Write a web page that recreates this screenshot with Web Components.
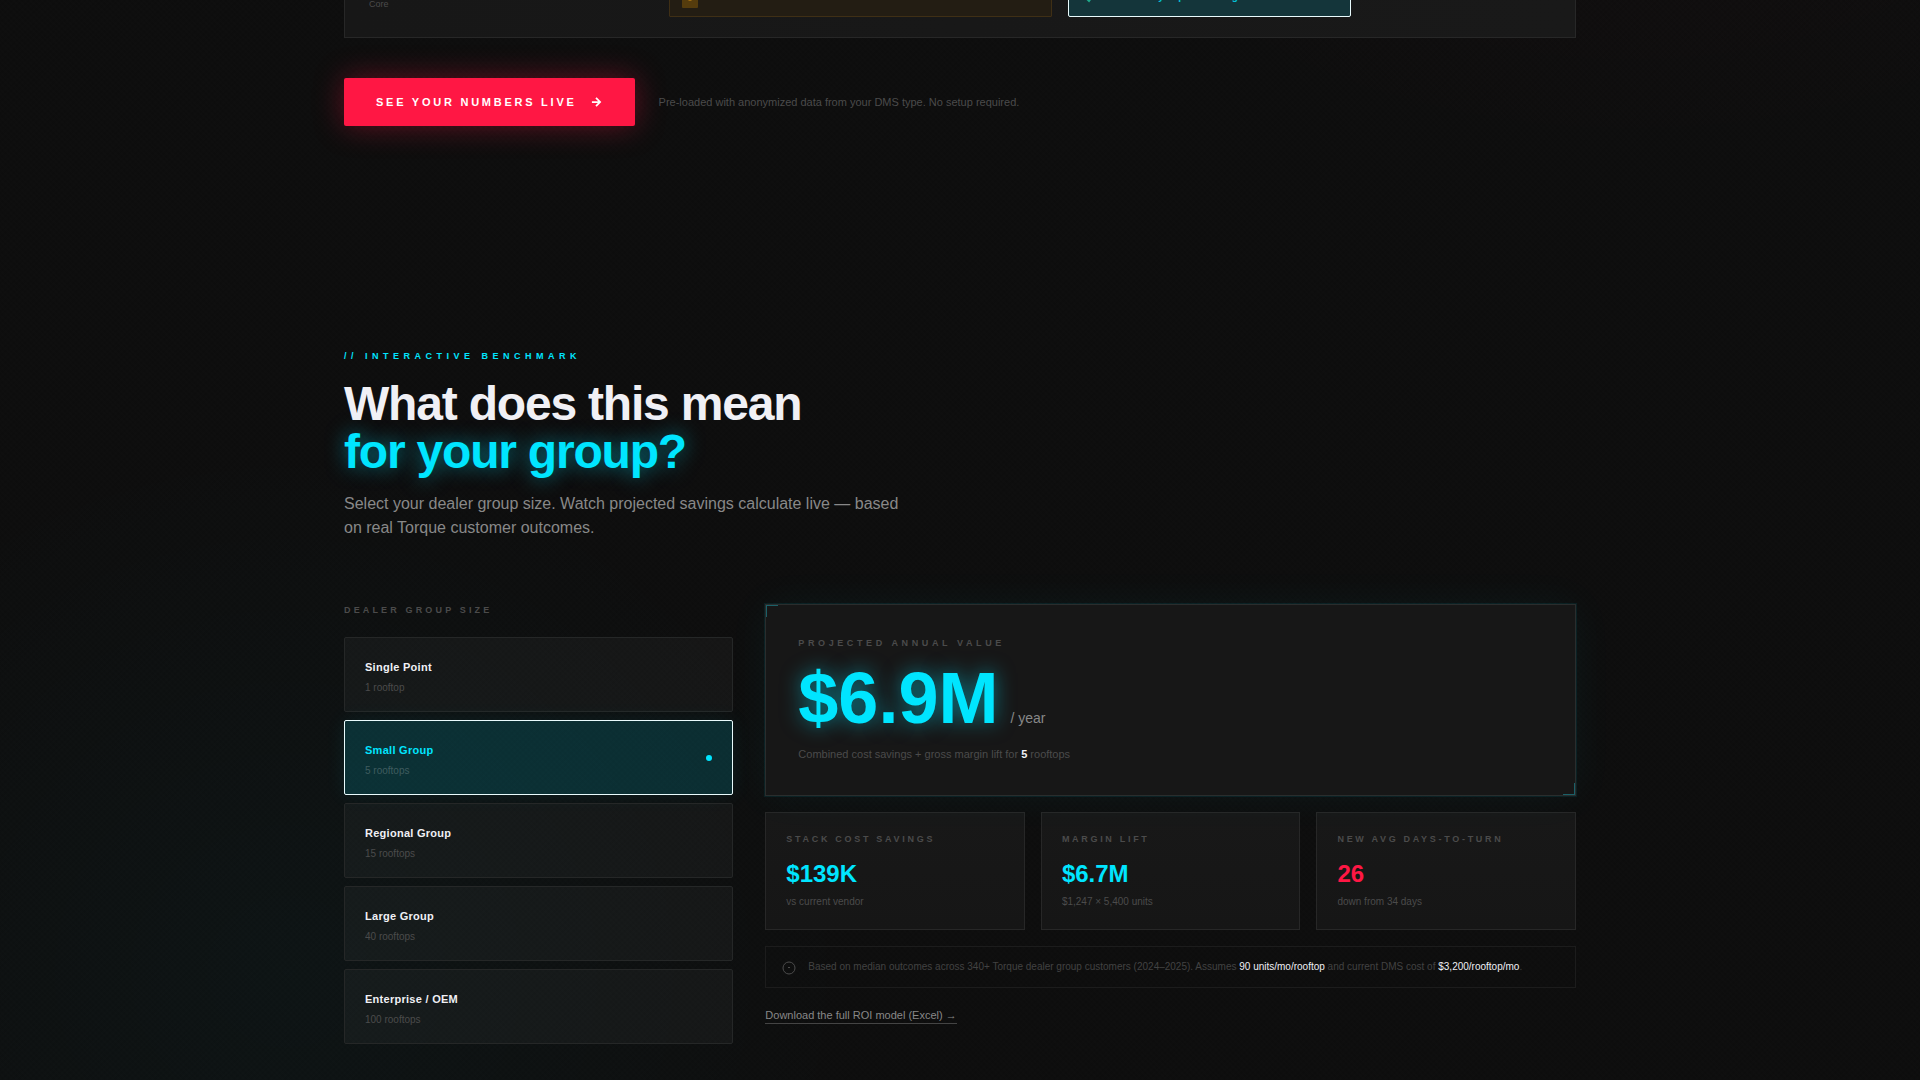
<!DOCTYPE html>
<html lang="en">
<head>
<meta charset="utf-8">
<title>Torque – Interactive Benchmark</title>
<style>
  :root {
    --cyan: #00e5ff;
    --red: #ff1744;
    --panel: #171717;
    --line: #272727;
    --dim: #4b4b4b;
    --mid: #888888;
    --light: #f0f0f5;
  }
  html { background: #0d0d0d; }
  body {
    margin: 0;
    font-family: "Liberation Sans", Arial, sans-serif;
    font-size: 16px;
    line-height: 24px;
    color: var(--light);
  }
</style>
</head>
<body>
<torque-page>
  <stack-compare></stack-compare>
  <cta-row note="Pre-loaded with anonymized data from your DMS type. No setup required.">See your numbers live</cta-row>
  <section-intro eyebrow="// Interactive Benchmark">
    <span slot="title">What does this mean</span>
    <span slot="accent">for your group?</span>
    Select your dealer group size. Watch projected savings calculate live — based on real Torque customer outcomes.
  </section-intro>
  <benchmark-grid>
    <group-picker slot="side">
      <group-option name="Single Point">1 rooftop</group-option>
      <group-option name="Small Group" selected>5 rooftops</group-option>
      <group-option name="Regional Group">15 rooftops</group-option>
      <group-option name="Large Group">40 rooftops</group-option>
      <group-option name="Enterprise / OEM">100 rooftops</group-option>
    </group-picker>
    <value-hero></value-hero>
    <stat-row>
      <stat-card label="Stack Cost Savings" value="$139K">vs current vendor</stat-card>
      <stat-card label="Margin Lift" value="$6.7M">$1,247 × 5,400 units</stat-card>
      <stat-card label="New Avg Days-to-Turn" value="26" tone="red">down from 34 days</stat-card>
    </stat-row>
    <info-note>Based on median outcomes across 340+ Torque dealer group customers (2024–2025). Assumes <b>90 units/mo/rooftop</b> and current DMS cost of <b>$3,200/rooftop/mo</b>.</info-note>
    <model-link></model-link>
  </benchmark-grid>
</torque-page>

<script>
const base = '*{box-sizing:border-box}';

function define(name, css, html) {
  customElements.define(name, class extends HTMLElement {
    constructor() {
      super();
      const root = this.attachShadow({ mode: 'open' });
      const markup = typeof html === 'function' ? html(this) : html;
      root.innerHTML = `<style>${base}${css}</style>${markup}`;
    }
  });
}

define('torque-page', `
  :host {
    display: block;
    min-height: 100vh;
    overflow: hidden;
    background:
      repeating-linear-gradient(45deg, rgba(255,255,255,.004) 0 2px, transparent 2px 4px),
      repeating-linear-gradient(-45deg, rgba(0,0,0,.06) 0 2px, transparent 2px 4px),
      radial-gradient(ellipse 30% 50% at 15% 90%, rgba(0,229,255,.03), transparent),
      radial-gradient(ellipse 30% 30% at 85% -15%, rgba(255,23,68,.02), transparent),
      #0e0e0e;
  }
  main { max-width: 1280px; margin: 0 auto; padding: 0 24px 36px; }
`, '<main><slot></slot></main>');

/* Last row of the stack timeline */
define('stack-compare', `
  :host {
    display: block;
    margin-top: -40px;
    padding: 0 24px 20px;
    background: linear-gradient(90deg, #171717, #191919);
    border: 1px solid var(--line);
    border-top: 0;
  }
  .row { display: grid; grid-template-columns: 284px 383px 283px; column-gap: 16px; height: 57px; align-items: end; }
  .name { font-size: 9px; line-height: 14px; color: var(--dim); padding-bottom: 6px; }
  .bar { display: flex; align-items: flex-start; gap: 8px; height: 57px; padding: 31px 12px 0; border-radius: 1px; }
  .bar svg { display: block; flex: none; }
  .legacy { background: #231d13; border: 1px solid #3f2f15; }
  .legacy svg { background: #553c0d; border-radius: 1px; }
  .torque { padding-top: 28px; background: #14353a; border: 1px solid #e9fbfd; border-radius: 2px; }
  .torque svg { margin-top: 4px; }
  .torque span { font-size: 10px; line-height: 15px; font-weight: 700; color: var(--cyan); opacity: .8; }
`, `
  <div class="row">
    <div class="name">Core</div>
    <div class="bar legacy"><svg width="16" height="16" viewBox="0 0 16 16"><path d="M8 2v4M8 8.500v.5" stroke="#e0951a" stroke-width="3"/></svg></div>
    <div class="bar torque">
      <svg width="16" height="16" viewBox="0 0 16 16"><path d="M4 4l4 4 5-7" fill="none" stroke="#1fa88a" stroke-width="2"/></svg>
      <span>Real-time sync plus alerting</span>
    </div>
  </div>`);

define('cta-row', `
  :host { display: flex; align-items: center; gap: 24px; margin-top: 40px; }
  button {
    display: inline-flex; align-items: center; gap: 12px;
    height: 48px; padding: 0 32px; border: 0; border-radius: 2px;
    background: var(--red); color: #fff;
    font: 700 11px/16px "Liberation Sans", Arial, sans-serif;
    letter-spacing: .25em; text-transform: uppercase;
    box-shadow: 0 0 30px rgba(255,23,68,.35);
  }
  p { margin: 0; font-size: 11px; line-height: 17px; color: var(--dim); }
`, el => `
  <button type="button"><slot></slot>
    <svg width="14" height="14" viewBox="0 0 24 24" fill="none" stroke="#fff" stroke-width="3"><path d="M5 12h14M12 5l7 7-7 7"/></svg>
  </button>
  <p>${el.getAttribute('note')}</p>`);

define('section-intro', `
  :host { display: block; margin-top: 223px; }
  .eyebrow { font-size: 9px; line-height: 15px; font-weight: 700; letter-spacing: .5em; text-transform: uppercase; color: var(--cyan); }
  h2 { margin: 16px 0; font-size: 48px; line-height: 48px; font-weight: 700; letter-spacing: -.025em; }
  .title, .accent { display: block; }
  .accent { color: var(--cyan); text-shadow: 0 0 20px rgba(0,229,255,.5); }
  p { margin: 0; max-width: 576px; color: var(--mid); }
`, el => `
  <div class="eyebrow">${el.getAttribute('eyebrow')}</div>
  <h2><span class="title"><slot name="title"></slot></span><span class="accent"><slot name="accent"></slot></span></h2>
  <p><slot></slot></p>`);

define('benchmark-grid', `
  :host { display: grid; grid-template-columns: repeat(12, 1fr); column-gap: 32px; align-items: start; margin-top: 64px; }
  .side { grid-column: span 4; }
  .main { grid-column: span 8; display: flex; flex-direction: column; gap: 16px; }
`, '<div class="side"><slot name="side"></slot></div><div class="main"><slot></slot></div>');

define('group-picker', `
  :host { display: block; }
  .label { margin-bottom: 20px; font-size: 9px; line-height: 13px; font-weight: 700; letter-spacing: .35em; text-transform: uppercase; color: var(--dim); }
  .list { display: flex; flex-direction: column; gap: 8px; }
`, '<div class="label" id="l">Dealer Group Size</div><div class="list" role="group" aria-labelledby="l"><slot></slot></div>');

define('group-option', `
  :host { display: block; }
  button {
    display: flex; align-items: center; justify-content: space-between;
    width: 100%; padding: 16px 20px; text-align: left;
    font: 400 16px/24px "Liberation Sans", Arial, sans-serif; color: var(--light);
    background: rgba(255,255,255,.035); border: 1px solid #252727; border-radius: 2px;
  }
  .name { font-size: 11px; line-height: 16px; font-weight: 700; letter-spacing: .025em; }
  .size { display: block; margin-top: 2px; font-size: 10px; line-height: 15px; color: var(--dim); }
  .dot { display: none; width: 6px; height: 6px; border-radius: 50%; background: var(--cyan); }
  :host([selected]) button { background: rgba(0,229,255,.15); border-color: #e9fbfd; box-shadow: 0 0 20px rgba(0,229,255,.08); }
  :host([selected]) .name { color: var(--cyan); }
  :host([selected]) .size { color: #3f5c5f; }
  :host([selected]) .dot { display: block; }
`, el => `
  <button type="button" aria-pressed="${el.hasAttribute('selected')}">
    <span><span class="name">${el.getAttribute('name')}</span><span class="size"><slot></slot></span></span>
    <span class="dot"></span>
  </button>`);

define('value-hero', `
  :host {
    display: block; position: relative; padding: 32px;
    background: var(--panel); border: 1px solid #2a2d2d;
    box-shadow: 0 0 0 1px rgba(0,229,255,.08), 0 0 40px rgba(0,229,255,.05);
  }
  .corner { position: absolute; width: 12px; height: 12px; border: 0 solid #1b6068; }
  .tl { top: 0; left: 0; border-width: 1px 0 0 1px; }
  .br { bottom: 0; right: 0; border-width: 0 1px 1px 0; }
  .label { font-size: 9px; line-height: 13px; font-weight: 700; letter-spacing: .4em; text-transform: uppercase; color: var(--dim); }
  .amount { display: flex; align-items: baseline; gap: 12px; height: 72px; margin: 12px 0; }
  .big { font-size: 72px; line-height: 72px; font-weight: 700; color: var(--cyan); text-shadow: 0 0 20px rgba(0,229,255,.5); }
  .per { font-size: 14px; line-height: 20px; color: var(--mid); }
  .sub { font-size: 11px; line-height: 17px; color: var(--dim); }
  b { color: var(--light); }
`, `
  <i class="corner tl"></i><i class="corner br"></i>
  <div class="label">Projected Annual Value</div>
  <div class="amount"><span class="big">$6.9M</span><span class="per">/ year</span></div>
  <div class="sub">Combined cost savings + gross margin lift for <b>5</b> rooftops</div>`);

define('stat-row', ':host { display: grid; grid-template-columns: repeat(3, 1fr); gap: 16px; }', '<slot></slot>');

define('stat-card', `
  :host { display: block; padding: 20px; background: linear-gradient(#181818, #161616); border: 1px solid var(--line); }
  .label { font-size: 9px; line-height: 13px; font-weight: 700; letter-spacing: .3em; text-transform: uppercase; color: var(--dim); }
  .value { margin: 12px 0 4px; font-size: 24px; line-height: 32px; font-weight: 700; color: var(--cyan); }
  :host([tone="red"]) .value { color: var(--red); }
  .sub { font-size: 10px; line-height: 15px; color: var(--dim); }
`, el => `
  <div class="label">${el.getAttribute('label')}</div>
  <div class="value">${el.getAttribute('value')}</div>
  <div class="sub"><slot></slot></div>`);

define('info-note', `
  :host { display: flex; align-items: flex-start; gap: 12px; padding: 12px 16px; border: 1px solid #1c1c1c; font-size: 10px; line-height: 15px; color: #424242; }
  svg { display: block; flex: none; margin-top: 2px; }
  ::slotted(b) { font-weight: 400; color: var(--light); }
`, `
  <svg width="14" height="14" viewBox="0 0 14 14" fill="none" stroke="#4c4c4c"><circle cx="7" cy="7" r="6"/><path d="M6 6.500h2"/></svg>
  <div><slot></slot></div>`);

define('model-link', `
  :host { display: block; margin-top: 2px; line-height: 16px; }
  a { display: inline-block; font-size: 11px; line-height: 16px; color: var(--mid); text-decoration: none; border-bottom: 1px solid #444; }
`, '<a href="#roi-model">Download the full ROI model (Excel) →</a>');
</script>
</body>
</html>
